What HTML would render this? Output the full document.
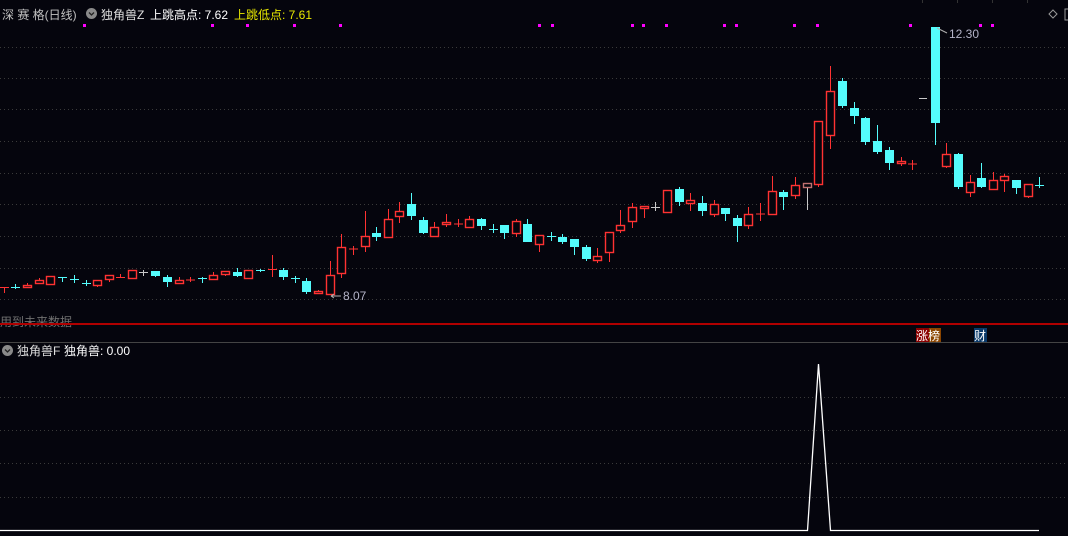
<!DOCTYPE html>
<html><head><meta charset="utf-8"><style>
html,body{margin:0;padding:0;background:#05050d;width:1068px;height:536px;overflow:hidden}
svg{display:block;font-family:"Liberation Sans","Noto Sans CJK SC",sans-serif}
.g{stroke:#3a3a3a;stroke-width:1;stroke-dasharray:1 3}
.rw{stroke:#ff3232;stroke-width:1;fill:none}
.cw{stroke:#54fcfc;stroke-width:1;fill:none}
.ww{stroke:#c8c8c8;stroke-width:1;fill:none}
.r{fill:#05050d;stroke:#ff3232;stroke-width:1.4}
.c{fill:#54fcfc}
.m{fill:#ff00ff}
</style></head><body>
<svg width="1068" height="536" viewBox="0 0 1068 536" xmlns="http://www.w3.org/2000/svg">
<g class="g">
<line x1="0" y1="47.5" x2="1068" y2="47.5"/><line x1="0" y1="78.5" x2="1068" y2="78.5"/>
<line x1="0" y1="109.5" x2="1068" y2="109.5"/><line x1="0" y1="141.5" x2="1068" y2="141.5"/>
<line x1="0" y1="173.5" x2="1068" y2="173.5"/><line x1="0" y1="204.5" x2="1068" y2="204.5"/>
<line x1="0" y1="236.5" x2="1068" y2="236.5"/><line x1="0" y1="268.5" x2="1068" y2="268.5"/>
<line x1="0" y1="299.5" x2="1068" y2="299.5"/>
<line x1="0" y1="397.5" x2="1068" y2="397.5"/><line x1="0" y1="430.5" x2="1068" y2="430.5"/>
<line x1="0" y1="463.5" x2="1068" y2="463.5"/><line x1="0" y1="497.5" x2="1068" y2="497.5"/>
</g>
<g stroke="#333" stroke-width="1"><line x1="922.5" y1="0" x2="922.5" y2="3"/><line x1="957.5" y1="0" x2="957.5" y2="3"/><line x1="992.5" y1="0" x2="992.5" y2="3"/><line x1="1027.5" y1="0" x2="1027.5" y2="3"/></g>
<g class="m">
<rect x="83" y="24" width="3" height="3"/><rect x="211" y="24" width="3" height="3"/><rect x="246" y="24" width="3" height="3"/><rect x="293" y="24" width="3" height="3"/><rect x="339" y="24" width="3" height="3"/><rect x="538" y="24" width="3" height="3"/><rect x="551" y="24" width="3" height="3"/><rect x="631" y="24" width="3" height="3"/><rect x="642" y="24" width="3" height="3"/><rect x="665" y="24" width="3" height="3"/><rect x="723" y="24" width="3" height="3"/><rect x="735" y="24" width="3" height="3"/><rect x="793" y="24" width="3" height="3"/><rect x="816" y="24" width="3" height="3"/><rect x="909" y="24" width="3" height="3"/><rect x="979" y="24" width="3" height="3"/><rect x="991" y="24" width="3" height="3"/>
</g>
<g>
<path class="rw" d="M4.5 287V293M0 287.5H9" stroke-width="2"/>
<path class="cw" d="M15.5 284V289M11 287.5H20"/>
<path class="rw" d="M27.5 283V288"/><rect class="r" x="23.5" y="285.5" width="8" height="2"/>
<path class="rw" d="M39.5 278V284"/><rect class="r" x="35.5" y="280.5" width="8" height="3"/>
<rect class="r" x="46.5" y="276.5" width="8" height="8"/>
<path class="cw" d="M62.5 277V282M58 277.5H67"/>
<path class="cw" d="M74.5 275V283M70 279.5H79"/>
<path class="cw" d="M86.5 280V286M82 283.5H91"/>
<path class="rw" d="M97.5 286V287"/><rect class="r" x="93.5" y="280.5" width="8" height="5"/>
<path class="rw" d="M109.5 279V282"/><rect class="r" x="105.5" y="275.5" width="8" height="4"/>
<path class="rw" d="M120.5 274V278M116 277.5H125" stroke-width="2"/>
<rect class="r" x="128.5" y="270.5" width="8" height="8"/>
<path class="ww" d="M143.5 270V276M139 272.5H148"/>
<path class="cw" d="M155.5 271V277"/><rect class="c" x="151" y="271" width="9" height="5"/>
<path class="cw" d="M167.5 275V287"/><rect class="c" x="163" y="277" width="9" height="5"/>
<path class="rw" d="M179.5 277V284"/><rect class="r" x="175.5" y="280.5" width="8" height="3"/>
<path class="rw" d="M190.5 277V282M186 280H195" stroke-width="2"/>
<path class="cw" d="M202.5 277V283M198 278.5H207"/>
<path class="rw" d="M213.5 272V275"/><rect class="r" x="209.5" y="275.5" width="8" height="4"/>
<path class="rw" d="M225.5 274V276"/><rect class="r" x="221.5" y="271.5" width="8" height="3"/>
<path class="cw" d="M237.5 268V277"/><rect class="c" x="233" y="272" width="9" height="4"/>
<rect class="r" x="244.5" y="270.5" width="8" height="8"/>
<path class="cw" d="M260.5 269V272M256 270.5H265"/>
<path class="rw" d="M272.5 255V277M268 269.5H277" stroke-width="2"/>
<path class="cw" d="M283.5 268V280"/><rect class="c" x="279" y="270" width="9" height="7"/>
<path class="cw" d="M295.5 276V283M291 278.5H300"/>
<path class="cw" d="M306.5 278V294"/><rect class="c" x="302" y="281" width="9" height="11"/>
<path class="rw" d="M318.5 290V291"/><rect class="r" x="314.5" y="291.5" width="8" height="2"/>
<path class="rw" d="M330.5 261V275"/><rect class="r" x="326.5" y="275.5" width="8" height="19"/>
<path class="rw" d="M341.5 234V247M341.5 273V278"/><rect class="r" x="337.5" y="247.5" width="8" height="26"/>
<path class="rw" d="M353.5 246V255M349 249H358" stroke-width="2"/>
<path class="rw" d="M365.5 211V252"/><rect class="r" x="361.5" y="236.5" width="8" height="10"/>
<path class="cw" d="M376.5 227V241"/><rect class="c" x="372" y="233" width="9" height="4"/>
<path class="rw" d="M388.5 209V237"/><rect class="r" x="384.5" y="219.5" width="8" height="18"/>
<path class="rw" d="M399.5 202V223"/><rect class="r" x="395.5" y="211.5" width="8" height="5"/>
<path class="cw" d="M411.5 193V220"/><rect class="c" x="407" y="204" width="9" height="12"/>
<path class="cw" d="M423.5 217V234"/><rect class="c" x="419" y="220" width="9" height="13"/>
<path class="rw" d="M434.5 222V227"/><rect class="r" x="430.5" y="227.5" width="8" height="9"/>
<path class="rw" d="M446.5 214V227"/><rect class="r" x="442.5" y="222.5" width="8" height="2"/>
<path class="rw" d="M458.5 219V227M454 224H463" stroke-width="2"/>
<path class="rw" d="M469.5 216V219"/><rect class="r" x="465.5" y="219.5" width="8" height="8"/>
<path class="cw" d="M481.5 218V230"/><rect class="c" x="477" y="219" width="9" height="7"/>
<path class="cw" d="M493.5 224V233M489 229.5H498"/>
<path class="cw" d="M504.5 225V239"/><rect class="c" x="500" y="225" width="9" height="8"/>
<path class="rw" d="M516.5 219V237"/><rect class="r" x="512.5" y="221.5" width="8" height="12"/>
<path class="cw" d="M527.5 219V242"/><rect class="c" x="523" y="224" width="9" height="18"/>
<path class="rw" d="M539.5 244V252"/><rect class="r" x="535.5" y="235.5" width="8" height="9"/>
<path class="cw" d="M551.5 232V241M547 236.5H556"/>
<path class="cw" d="M562.5 234V244"/><rect class="c" x="558" y="237" width="9" height="5"/>
<path class="cw" d="M574.5 239V255"/><rect class="c" x="570" y="239" width="9" height="8"/>
<path class="cw" d="M586.5 245V261"/><rect class="c" x="582" y="247" width="9" height="12"/>
<path class="rw" d="M597.5 248V256M597.5 260V263"/><rect class="r" x="593.5" y="256.5" width="8" height="4"/>
<path class="rw" d="M609.5 252V262"/><rect class="r" x="605.5" y="232.5" width="8" height="20"/>
<path class="rw" d="M620.5 210V225M620.5 230V233"/><rect class="r" x="616.5" y="225.5" width="8" height="5"/>
<path class="rw" d="M632.5 203V207M632.5 221V228"/><rect class="r" x="628.5" y="207.5" width="8" height="14"/>
<path class="rw" d="M644.5 208V218"/><rect class="r" x="640.5" y="206.5" width="8" height="2"/>
<path class="ww" d="M655.5 202V211M651 207.5H660"/>
<path class="rw" d="M667.5 212V213"/><rect class="r" x="663.5" y="190.5" width="8" height="22"/>
<path class="cw" d="M679.5 187V206"/><rect class="c" x="675" y="189" width="9" height="13"/>
<path class="rw" d="M690.5 193V211"/><rect class="r" x="686.5" y="200.5" width="8" height="3"/>
<path class="cw" d="M702.5 196V216"/><rect class="c" x="698" y="203" width="9" height="8"/>
<path class="rw" d="M714.5 200V217"/><rect class="r" x="710.5" y="204.5" width="8" height="10"/>
<path class="cw" d="M725.5 208V221"/><rect class="c" x="721" y="208" width="9" height="6"/>
<path class="cw" d="M737.5 215V242"/><rect class="c" x="733" y="218" width="9" height="8"/>
<path class="rw" d="M748.5 207V214M748.5 225V229"/><rect class="r" x="744.5" y="214.5" width="8" height="11"/>
<path class="rw" d="M760.5 203V221M756 214H765" stroke-width="2"/>
<path class="rw" d="M772.5 176V191"/><rect class="r" x="768.5" y="191.5" width="8" height="23"/>
<path class="cw" d="M783.5 190V210"/><rect class="c" x="779" y="192" width="9" height="5"/>
<path class="rw" d="M795.5 177V185M795.5 195V199"/><rect class="r" x="791.5" y="185.5" width="8" height="10"/>
<path class="ww" d="M807.5 187V210"/><rect x="803.5" y="183.5" width="8" height="4" fill="#05050d" stroke="#c07070" stroke-width="1.4"/>
<path class="rw" d="M818.5 184V187"/><rect class="r" x="814.5" y="121.5" width="8" height="63"/>
<path class="rw" d="M830.5 66V91M830.5 135V149"/><rect class="r" x="826.5" y="91.5" width="8" height="44"/>
<path class="cw" d="M842.5 78V108"/><rect class="c" x="838" y="81" width="9" height="25"/>
<path class="cw" d="M854.5 102V124"/><rect class="c" x="850" y="108" width="9" height="8"/>
<path class="cw" d="M865.5 117V145"/><rect class="c" x="861" y="118" width="9" height="24"/>
<path class="cw" d="M877.5 125V154"/><rect class="c" x="873" y="141" width="9" height="11"/>
<path class="cw" d="M889.5 147V170"/><rect class="c" x="885" y="150" width="9" height="13"/>
<path class="rw" d="M901.5 157V166"/><rect class="r" x="897.5" y="161.5" width="8" height="2"/>
<path class="rw" d="M912.5 160V170M908 164H917" stroke-width="2"/>
<path d="M919 98.5H927" stroke="#c8c8c8" stroke-width="1"/>
<path class="cw" d="M935.5 27V145"/><rect class="c" x="931" y="27" width="9" height="96"/>
<path class="rw" d="M946.5 143V154M946.5 167V168"/><rect class="r" x="942.5" y="154.5" width="8" height="12"/>
<path class="cw" d="M958.5 153V189"/><rect class="c" x="954" y="154" width="9" height="33"/>
<path class="rw" d="M970.5 175V182M970.5 193V197"/><rect class="r" x="966.5" y="182.5" width="8" height="10"/>
<path class="cw" d="M981.5 163V188"/><rect class="c" x="977" y="178" width="9" height="9"/>
<path class="rw" d="M993.5 172V180"/><rect class="r" x="989.5" y="180.5" width="8" height="9"/>
<path class="rw" d="M1004.5 174V176M1004.5 181V192"/><rect class="r" x="1000.5" y="176.5" width="8" height="4"/>
<path class="cw" d="M1016.5 180V194"/><rect class="c" x="1012" y="180" width="9" height="8"/>
<path class="rw" d="M1028.5 197V198"/><rect class="r" x="1024.5" y="184.5" width="8" height="12"/>
<path class="cw" d="M1039.5 177V188M1035 185.5H1044"/>
</g>
<path d="M331 296H341M331 296l3 -2M331 296l3 2" stroke="#b0b0b0" stroke-width="1" fill="none"/>
<text x="343" y="300" font-size="12" fill="#b4b4c8">8.07</text>
<path d="M937 28l10 5" stroke="#b0b0b0" stroke-width="1" fill="none"/>
<text x="949" y="38" font-size="12" fill="#b4b4c8">12.30</text>
<text x="2" y="19" font-size="12" fill="#c0c0c0">深 赛 格(日线)</text>
<circle cx="91.5" cy="13.5" r="5.5" fill="#8a8a8a"/><path d="M89 12.5l2.5 2.5 2.5-2.5" stroke="#222" stroke-width="1.3" fill="none"/>
<text x="101" y="19" font-size="12" fill="#e0e0e0">独角兽Z</text>
<text x="150" y="19" font-size="12" fill="#ffffff">上跳高点: 7.62</text>
<text x="234" y="19" font-size="12" fill="#e8e800">上跳低点: 7.61</text>
<path d="M1053 10l4 4-4 4-4-4z" stroke="#999" fill="none"/>
<path d="M1068 9h-3v11h3" stroke="#999" fill="none"/>
<text x="0" y="326" font-size="12" fill="#707070">用到未来数据</text>
<rect x="0" y="323" width="1068" height="2" fill="#b00000"/>
<rect x="916" y="328" width="13" height="14" fill="#8b0000"/><rect x="929" y="328" width="12" height="14" fill="#8b4500"/>
<text x="916" y="340" font-size="12" fill="#ffffff">涨榜</text>
<rect x="974" y="328" width="13" height="14" fill="#0a3a6a"/>
<text x="974" y="340" font-size="12" fill="#ffffff">财</text>
<rect x="0" y="342" width="1068" height="1" fill="#444"/>
<circle cx="7.5" cy="350.5" r="5.5" fill="#8a8a8a"/><path d="M5 349.5l2.5 2.5 2.5-2.5" stroke="#222" stroke-width="1.3" fill="none"/>
<text x="17" y="355" font-size="12" fill="#e0e0e0">独角兽F</text>
<text x="64" y="355" font-size="12" fill="#ffffff">独角兽: 0.00</text>
<path d="M0 530.5H807.5L818.5 364L830.5 530.5H1039" stroke="#ffffff" stroke-width="1.3" fill="none"/>
</svg>
</body></html>
